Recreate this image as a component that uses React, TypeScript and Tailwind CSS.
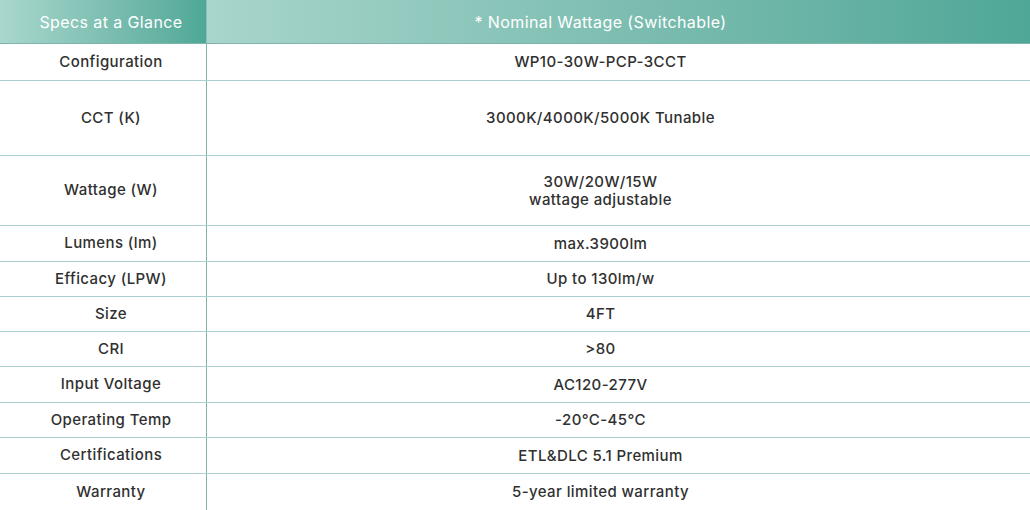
const rows: { label: string; value: string[]; h: string }[] = [
  { label: 'Configuration', value: ['WP10-30W-PCP-3CCT'], h: 'h-[37px]' },
  { label: 'CCT (K)', value: ['3000K/4000K/5000K Tunable'], h: 'h-[75px]' },
  { label: 'Wattage (W)', value: ['30W/20W/15W', 'wattage adjustable'], h: 'h-[70px]' },
  { label: 'Lumens (lm)', value: ['max.3900lm'], h: 'h-[36px]' },
  { label: 'Efficacy (LPW)', value: ['Up to 130lm/w'], h: 'h-[35px]' },
  { label: 'Size', value: ['4FT'], h: 'h-[35px]' },
  { label: 'CRI', value: ['>80'], h: 'h-[35px]' },
  { label: 'Input Voltage', value: ['AC120-277V'], h: 'h-[36px]' },
  { label: 'Operating Temp', value: ['-20°C-45°C'], h: 'h-[35px]' },
  { label: 'Certifications', value: ['ETL&DLC 5.1 Premium'], h: 'h-[36px]' },
  { label: 'Warranty', value: ['5-year limited warranty'], h: 'h-[36px]' },
];

export default function App() {
  return (
    <div className="w-[1030px] h-[510px] overflow-hidden bg-white font-['Inter','Noto_Sans',sans-serif] text-[15px] tracking-[0.4px] font-medium text-[#303030]">
      <div className="flex h-[44px] border-b border-[#7fb3ad] text-[16px] font-normal text-white">
        <div className="flex w-[207px] items-center justify-center border-r border-[#8fc3ba] bg-gradient-to-r from-[#a9d7ce] to-[#4fa897] pl-[16px] pt-[1px]">
          Specs at a Glance
        </div>
        <div className="flex flex-1 items-center justify-center bg-gradient-to-r from-[#a8d5cc] to-[#4fa797] pr-[36px] pt-[1px]">
          * Nominal Wattage (Switchable)
        </div>
      </div>
      {rows.map((r, i) => (
        <div
          key={r.label}
          className={`flex ${r.h} ${i === rows.length - 1 ? '' : 'border-b border-[#a9d0cf]'}`}
        >
          <div className="flex w-[207px] items-center justify-center border-r border-[#80b2ae] pl-[16px]">
            {r.label}
          </div>
          <div className="flex flex-1 flex-col items-center justify-center pr-[36px] leading-[18px]">
            {r.value.map((v) => (
              <span key={v}>{v}</span>
            ))}
          </div>
        </div>
      ))}
    </div>
  );
}
